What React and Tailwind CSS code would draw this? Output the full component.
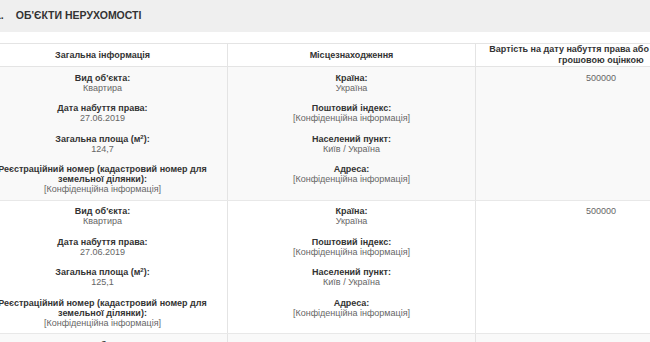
import React from 'react';

const ROWS = [
  { area: '124,7', shade: true },
  { area: '125,1', shade: false },
  { area: '118,3', shade: true },
];

function Field({ label, value }) {
  return (
    <div className="mb-[10.5px] last:mb-0">
      <div className="font-bold text-[#333]">{label}</div>
      <div className="text-[#666]">{value}</div>
    </div>
  );
}

function Row({ area, shade }) {
  return (
    <div className={`grid grid-cols-[250px_248px_250px] border-b border-[#e8e8e8] ${shade ? 'bg-[#f9f9f9]' : 'bg-white'}`}>
      <div className="border-r border-[#e4e4e4] text-center py-[5.5px] px-2">
        <Field label="Вид об'єкта:" value="Квартира" />
        <Field label="Дата набуття права:" value="27.06.2019" />
        <Field label={<>Загальна площа (м<sup className="text-[6px]">2</sup>):</>} value={area} />
        <Field label="Реєстраційний номер (кадастровий номер для земельної ділянки):" value="[Конфіденційна інформація]" />
      </div>
      <div className="border-r border-[#e4e4e4] text-center py-[5.5px] px-2">
        <Field label="Країна:" value="Україна" />
        <Field label="Поштовий індекс:" value="[Конфіденційна інформація]" />
        <Field label="Населений пункт:" value="Київ / Україна" />
        <Field label="Адреса:" value="[Конфіденційна інформація]" />
      </div>
      <div className="text-center pt-[5.5px] px-2 text-[#666]">500000</div>
    </div>
  );
}

export default function App() {
  return (
    <div className="w-[650px] h-[342px] overflow-hidden bg-white font-['Liberation_Sans',Arial,sans-serif]">
      <div className="ml-[-22px] w-[770px]">
        {/* Section title */}
        <div className="h-[32px] bg-[#efefef] flex items-center pl-[17px] text-[10.5px] font-bold text-[#333]">
          <span>1.</span>
          <span className="ml-[12px]">ОБ'ЄКТИ НЕРУХОМОСТІ</span>
        </div>

        {/* Table */}
        <div className="mt-[11px] text-[9px] leading-[10px]">
          <div className="grid grid-cols-[250px_248px_250px] border-t border-b border-[#e4e4e4] bg-white font-bold text-[#333] leading-[11px]">
            <div className="border-r border-[#e4e4e4] flex items-center justify-center text-center px-2">Загальна інформація</div>
            <div className="border-r border-[#e4e4e4] flex items-center justify-center text-center px-2">Місцезнаходження</div>
            <div className="flex items-center justify-center text-center px-2">Вартість на дату набуття права або за останньою грошовою оцінкою</div>
          </div>
          {ROWS.map((r, i) => (
            <Row key={i} {...r} />
          ))}
        </div>
      </div>
    </div>
  );
}
